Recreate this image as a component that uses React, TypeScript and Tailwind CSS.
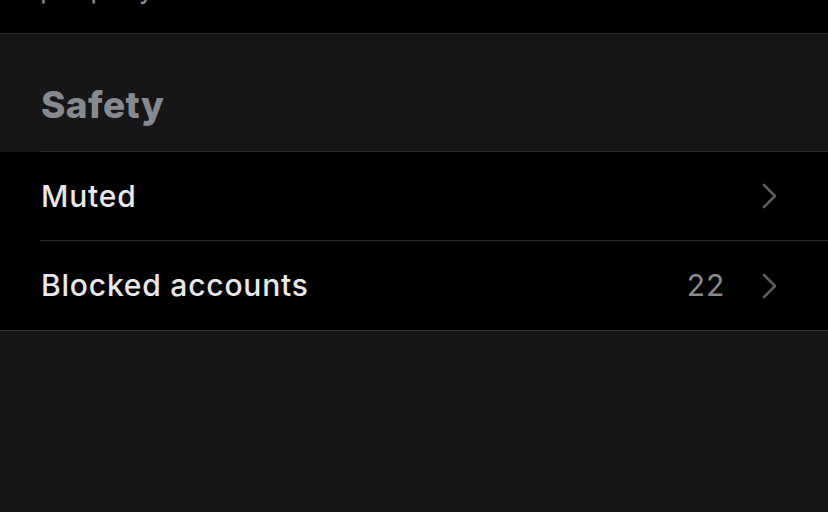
import React from "react";

function Chevron() {
  return (
    <svg width="16" height="26" viewBox="0 0 16 26" fill="none" className="shrink-0">
      <path d="M2 2 L13 13 L2 24" stroke="#5b5b5f" strokeWidth="2.6" strokeLinecap="round" strokeLinejoin="round" />
    </svg>
  );
}

function Row({ label, value, last }: { label: string; value?: string; last?: boolean }) {
  return (
    <div className="bg-black pl-[40px]">
      <div className={`flex items-center h-[89px] pr-[50px] ${last ? "h-[88px]" : "border-b border-[#2c2c2e]"}`}>
        <span className="text-[30px] text-[#e8e8ea] tracking-[0.8px] font-medium flex-1 pl-[1px]">{label}</span>
        {value && <span className="text-[30px] text-[#8a8a8e] tracking-[0.8px] mr-[37px]">{value}</span>}
        <Chevron />
      </div>
    </div>
  );
}

export default function App() {
  return (
    <div className="w-[828px] h-[512px] overflow-hidden bg-[#161618]" style={{ fontFamily: "Inter, 'Noto Sans', sans-serif" }}>
      <div className="bg-black h-[34px] border-b border-[#2c2c2e] overflow-hidden pl-[40px]">
        <div className="text-[28px] leading-[34px] text-[#8a8a8e] mt-[-29px] whitespace-nowrap">
          people you don't follow or follow
        </div>
      </div>
      <div className="pl-[40px]">
        <div className="h-[118px] border-b border-[#2c2c2e] flex items-end pb-[28px]">
          <h2 className="text-[37px] font-extrabold text-[#868a90] tracking-[0.4px] leading-none pl-[1px]">Safety</h2>
        </div>
      </div>
      <div className="bg-black border-b border-[#2c2c2e]">
        <Row label="Muted" />
        <Row label="Blocked accounts" value="22" last />
      </div>
    </div>
  );
}
